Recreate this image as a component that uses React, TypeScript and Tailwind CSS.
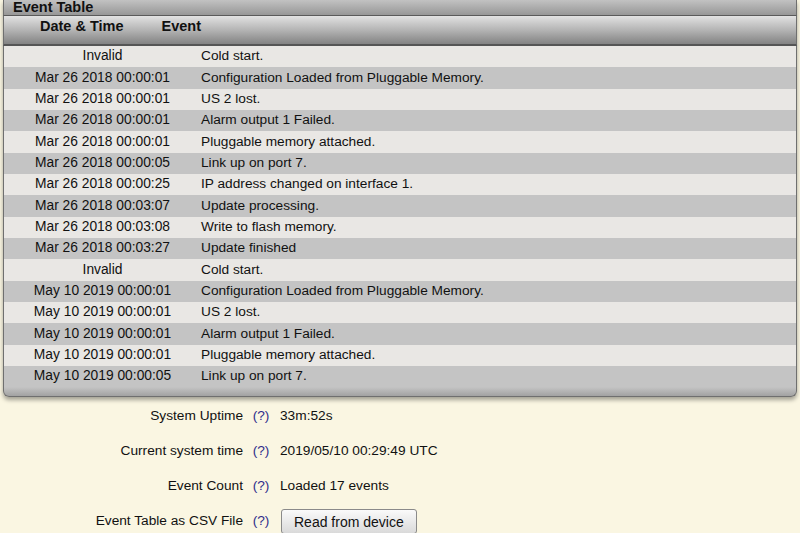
import React from "react";

const events: [string, string][] = [
  ["Invalid", "Cold start."],
  ["Mar 26 2018 00:00:01", "Configuration Loaded from Pluggable Memory."],
  ["Mar 26 2018 00:00:01", "US 2 lost."],
  ["Mar 26 2018 00:00:01", "Alarm output 1 Failed."],
  ["Mar 26 2018 00:00:01", "Pluggable memory attached."],
  ["Mar 26 2018 00:00:05", "Link up on port 7."],
  ["Mar 26 2018 00:00:25", "IP address changed on interface 1."],
  ["Mar 26 2018 00:03:07", "Update processing."],
  ["Mar 26 2018 00:03:08", "Write to flash memory."],
  ["Mar 26 2018 00:03:27", "Update finished"],
  ["Invalid", "Cold start."],
  ["May 10 2019 00:00:01", "Configuration Loaded from Pluggable Memory."],
  ["May 10 2019 00:00:01", "US 2 lost."],
  ["May 10 2019 00:00:01", "Alarm output 1 Failed."],
  ["May 10 2019 00:00:01", "Pluggable memory attached."],
  ["May 10 2019 00:00:05", "Link up on port 7."],
];

function InfoRow({ label, children }: { label: string; children: React.ReactNode }) {
  return (
    <div className="flex h-[35px] items-center">
      <div className="w-[243px] text-right">{label}</div>
      <span className="ml-[7px] w-[22px] text-center text-[#2e2e8c]">(?)</span>
      <div className="ml-[8px] flex items-center">{children}</div>
    </div>
  );
}

export default function App() {
  return (
    <div
      className="w-[800px] h-[533px] overflow-hidden bg-[#faf6e2] text-[13.7px] text-[#111]"
      style={{ fontFamily: '"Liberation Sans", Arial, sans-serif' }}
    >
      {/* Event table panel */}
      <div className="mx-[3px] w-[794px] rounded-b-[6px] shadow-[0_3px_4px_rgba(0,0,0,0.35)]">
        <div className="h-[16px] border-x border-[#6f6f6f] border-b border-b-[#5a5a5a] bg-gradient-to-b from-[#c2c2c2] to-[#979797] pl-[9px] text-[14.5px] font-bold leading-[15px]">
          Event Table
        </div>
        <div className="flex h-[30px] border-x border-[#6f6f6f] border-b-2 border-b-[#555] bg-gradient-to-b from-[#e2e2e2] via-[#b4b4b4] to-[#838383] text-[14.5px] font-bold">
          <span className="ml-[36px]">Date &amp; Time</span>
          <span className="ml-[38px]">Event</span>
        </div>
        {events.map(([date, text], i) => (
          <div
            key={i}
            className={
              "flex h-[21.33px] items-center border-x border-[#6f6f6f] " +
              (i % 2 === 0 ? "bg-[#e9e7e4]" : "bg-[#c4c4c4]")
            }
          >
            <div className="w-[197px] text-center text-[13.8px]">{date}</div>
            <div>{text}</div>
          </div>
        ))}
        <div className="h-[10px] rounded-b-[6px] border-x border-b border-[#6f6f6f] bg-gradient-to-b from-[#c4c4c4] to-[#a2a2a2]"></div>
      </div>

      {/* Info rows */}
      <div className="pt-[2px]">
        <InfoRow label="System Uptime">33m:52s</InfoRow>
        <InfoRow label="Current system time">2019/05/10 00:29:49 UTC</InfoRow>
        <InfoRow label="Event Count">Loaded 17 events</InfoRow>
        <InfoRow label="Event Table as CSV File">
          <button className="ml-[1px] h-[25px] rounded-[3px] border border-[#8a8a8a] bg-gradient-to-b from-[#fafafa] to-[#dadada] px-[12px] text-[14px] leading-[22px] text-[#111]">
            Read from device
          </button>
        </InfoRow>
      </div>
    </div>
  );
}
